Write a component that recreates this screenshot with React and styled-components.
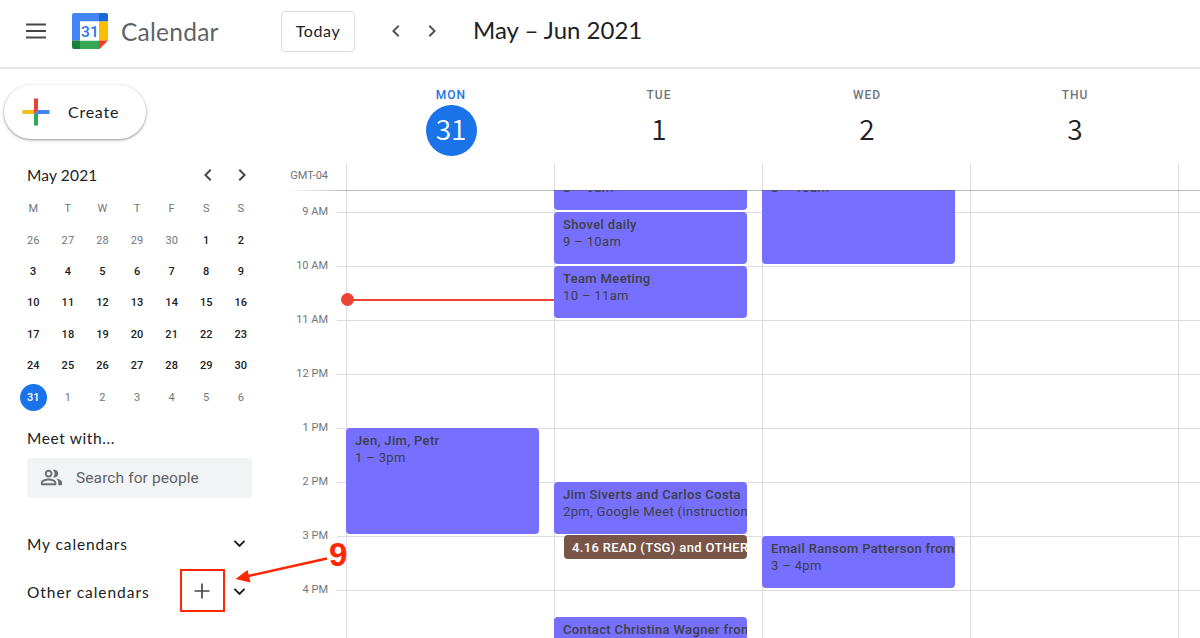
import React from "react";
import styled, { createGlobalStyle, css } from "styled-components";
import { MdChevronLeft, MdChevronRight, MdOutlinePeopleAlt, MdKeyboardArrowDown } from "react-icons/md";

const HOUR = 54;

const miniDays = ["M", "T", "W", "T", "F", "S", "S"];
// the mini month starts on April 26
const miniDates = [
  26, 27, 28, 29, 30,
  ...Array.from({ length: 31 }, (_, i) => i + 1),
  1, 2, 3, 4, 5, 6,
];

const hours = ["9 AM", "10 AM", "11 AM", "12 PM", "1 PM", "2 PM", "3 PM", "4 PM"];

// start and length are in half hours counted from 8 AM
const week = [
  {
    name: "MON", date: 31, today: true,
    events: [{ title: "Jen, Jim, Petr", time: "1 – 3pm", start: 10, length: 4 }],
  },
  {
    name: "TUE", date: 1,
    events: [
      { time: "8 – 9am", start: 0, length: 2 },
      { title: "Shovel daily", time: "9 – 10am", start: 2, length: 2 },
      { title: "Team Meeting", time: "10 – 11am", start: 4, length: 2 },
      { title: "Jim Siverts and Carlos Costa", time: "2pm, Google Meet (instructions)", start: 12, length: 2 },
      { title: "4.16 READ (TSG) and OTHER", start: 14, length: 1, brown: true },
      { title: "Contact Christina Wagner from", start: 17, length: 2 },
    ],
  },
  {
    name: "WED", date: 2,
    events: [
      { time: "8 – 10am", start: 0, length: 4 },
      { title: "Email Ransom Patterson from", time: "3 – 4pm", start: 14, length: 2 },
    ],
  },
  { name: "THU", date: 3, events: [] },
  { name: "", date: "", events: [] },
];

const Logo = () => (
  <svg width="36" height="36" viewBox="0 0 36 36">
    <path d="M2 0h25v8.5H8v19H0V2a2 2 0 0 1 2-2z" fill="#4285f4" />
    <path d="M27 0h7a2 2 0 0 1 2 2v6.5h-9z" fill="#1967d2" />
    <path d="M27 8.5h9v19h-9z" fill="#fbbc04" />
    <path d="M8 27.5h19.5V36H8z" fill="#34a853" />
    <path d="M0 27.5h8V36H2a2 2 0 0 1-2-2z" fill="#188038" />
    <path d="M27 27.5h9L27.5 36H27z" fill="#fc3a22" />
    <path d="M8 8.5h19v19H8z" fill="#fff" />
    <LogoText x="17.9" y="23.7" textAnchor="middle">31</LogoText>
  </svg>
);

const Plus = () => (
  <svg width="28" height="28" viewBox="0 0 28 28">
    <path d="M12 .5h4v12L12 16z" fill="#ea4335" />
    <path d="M.5 12H12v4H.5z" fill="#fbbc04" />
    <path d="M12 16h4v11.5h-4z" fill="#34a853" />
    <path d="M16 12h11.5v4H12z" fill="#4285f4" />
  </svg>
);

const Header = () => (
  <Top>
    <MenuButton>
      <svg viewBox="0 0 28 28">
        <path d="M4 7.5h20M4 14h20M4 20.5h20" stroke="currentColor" strokeWidth="1.8" />
      </svg>
    </MenuButton>
    <Brand>
      <Logo />
      <BrandName>Calendar</BrandName>
    </Brand>
    <Today>Today</Today>
    <Arrows>
      <MdChevronLeft />
      <MdChevronRight />
    </Arrows>
    <Range>May – Jun 2021</Range>
  </Top>
);

const MiniMonth = () => (
  <Month>
    <MonthTop>
      <SideTitle $spacing="0.15px">May 2021</SideTitle>
      <MonthArrows>
        <MdChevronLeft />
        <MdChevronRight />
      </MonthArrows>
    </MonthTop>
    <MonthGrid>
      {miniDays.map((day, i) => <MiniCell key={i} $muted>{day}</MiniCell>)}
      {miniDates.map((date, i) => (
        <MiniCell key={i} $muted={i < 5 || i > 35} $today={i === 35}>
          <span>{date}</span>
        </MiniCell>
      ))}
    </MonthGrid>
  </Month>
);

const Sidebar = () => (
  <Side>
    <Create>
      <Plus />
      <span>Create</span>
    </Create>
    <MiniMonth />
    <MeetTitle $spacing="0.6px">Meet with...</MeetTitle>
    <Search>
      <MdOutlinePeopleAlt />
      <span>Search for people</span>
    </Search>
    <ListRow>
      <ListName $spacing="0.9px">My calendars</ListName>
      <MdKeyboardArrowDown />
    </ListRow>
    <ListRow>
      <ListName $spacing="0.95px">Other calendars</ListName>
      <AddButton>
        <svg viewBox="0 0 26 26">
          <path d="M13 5.5v15M5.5 13h15" stroke="currentColor" strokeWidth="1.7" />
        </svg>
        <Highlight />
      </AddButton>
      <MdKeyboardArrowDown />
    </ListRow>
  </Side>
);

const Week = () => (
  <WeekArea>
    <DaysHead>
      {week.map((day, i) => (
        <DayHead key={i}>
          <DayName $today={day.today}>{day.name}</DayName>
          <DayDate $today={day.today}>{day.date}</DayDate>
        </DayHead>
      ))}
    </DaysHead>
    <AllDay>
      <Zone>GMT-04</Zone>
      {week.map((day, i) => <AllDayCell key={i} />)}
    </AllDay>
    <Divider />
    <Scroller>
      <TimeGrid>
        <Times>
          {hours.map((hour) => <Time key={hour}>{hour}</Time>)}
        </Times>
        <Ticks />
        {week.map((day, i) => (
          <Column key={i}>
            {day.events.map((event) => (
              <Event
                key={event.start}
                $start={event.start}
                $length={event.length}
                $brown={event.brown}
                $untitled={!event.title}
              >
                {event.title && <strong>{event.title}</strong>}
                {event.time && <span>{event.time}</span>}
              </Event>
            ))}
            {day.today && <NowLine />}
          </Column>
        ))}
      </TimeGrid>
    </Scroller>
  </WeekArea>
);

const App = () => {
  return (
    <Page>
      <GlobalStyle />
      <Header />
      <Main>
        <Sidebar />
        <Week />
      </Main>
      <Pointer width="120" height="50" viewBox="0 0 120 50">
        <path d="M97 18.5L18 36" stroke="#ff2600" strokeWidth="2.4" />
        <path d="M5.5 39L17.5 30L20.5 42.5z" fill="#ff2600" />
      </Pointer>
      <Step>9</Step>
    </Page>
  );
};

export default App;

const GlobalStyle = createGlobalStyle`
* {
  box-sizing: border-box;
}
body {
  margin: 0;
  background: #fff;
  font-family: Roboto, sans-serif;
  color: #202124;
  overflow: hidden;
}
`;

const googleFont = css`
font-family: Lato, sans-serif;
`;

const Page = styled.div`
position: relative;
width: 1200px;
height: 638px;
display: flex;
flex-direction: column;
overflow: hidden;
`;

const Top = styled.header`
height: 69px;
flex: none;
display: flex;
align-items: center;
padding-bottom: 5px;
border-bottom: 2px solid #e6e7e9;
`;

const MenuButton = styled.div`
width: 72px;
display: flex;
padding-left: 22px;

svg {
  width: 28px;
  height: 28px;
  color: #444746;
}
`;

const Brand = styled.div`
width: 209px;
display: flex;
align-items: center;
gap: 13px;
`;

const LogoText = styled.text`
font-family: Roboto, sans-serif;
font-size: 15.5px;
font-weight: 500;
fill: #2a75ea;
`;

const BrandName = styled.div`
${googleFont}
font-size: 24.5px;
line-height: 36px;
padding-top: 2px;
color: #5f6368;
letter-spacing: 0.25px;
`;

const Today = styled.div`
${googleFont}
width: 74px;
height: 41px;
display: flex;
align-items: center;
justify-content: center;
padding-bottom: 1px;
border: 1px solid #dadce0;
border-radius: 4px;
font-size: 16px;
letter-spacing: 0.6px;
`;

const Arrows = styled.div`
width: 118px;
display: flex;
gap: 12px;
padding-left: 29px;

svg {
  width: 24px;
  height: 24px;
  color: #50545a;
}
`;

const Range = styled.div`
${googleFont}
font-size: 24px;
line-height: 34px;
padding-bottom: 2px;
white-space: nowrap;
`;

const Main = styled.main`
flex: 1;
min-height: 0;
display: flex;
`;

const Side = styled.aside`
width: 284px;
flex: none;
padding: 16px 0 0 4px;
`;

const Create = styled.div`
${googleFont}
width: 142px;
height: 54px;
display: flex;
align-items: center;
gap: 18px;
padding-left: 18px;
border-radius: 27px;
box-shadow: 0 1px 2px rgba(60, 64, 67, 0.4), 0 1px 3px 1px rgba(60, 64, 67, 0.15);
font-size: 16px;
letter-spacing: 0.75px;

span {
  padding-bottom: 2px;
}
`;

const Month = styled.div`
padding-top: 23px;
`;

const MonthTop = styled.div`
height: 26px;
display: flex;
align-items: center;
justify-content: space-between;
padding: 0 30px 0 23px;
`;

const SideTitle = styled.div`
${googleFont}
font-size: 15.5px;
letter-spacing: ${({ $spacing }) => $spacing};
`;

const MonthArrows = styled.div`
display: flex;
gap: 10px;

svg {
  width: 24px;
  height: 24px;
  color: #44474b;
}
`;

const MonthGrid = styled.div`
width: 242px;
margin: 5px 0 0 12px;
display: grid;
grid-template-columns: repeat(7, 34.6px);
grid-auto-rows: 31.43px;
`;

const MiniCell = styled.div`
display: flex;
align-items: center;
justify-content: center;
font-size: 11px;
font-weight: 500;
letter-spacing: 0.1px;
color: #202124;
${({ $muted }) => $muted && `
font-weight: 400;
color: #70757a;
`}

span {
  width: 27px;
  height: 27px;
  flex: none;
  line-height: 27px;
  text-align: center;
  border-radius: 50%;
  ${({ $today }) => $today && `
  background: #1a73e8;
  color: #fff;
  `}
}
`;

const MeetTitle = styled(SideTitle)`
height: 44px;
padding: 15px 0 0 23px;
line-height: 20px;
`;

const Search = styled.div`
width: 225px;
height: 40px;
margin: 1px 0 22px 23px;
display: flex;
align-items: center;
gap: 13px;
padding-left: 13px;
border-radius: 4px;
background: #f1f3f4;
font-size: 15.5px;
letter-spacing: 0.1px;
color: #5f6368;

svg {
  width: 23px;
  height: 23px;
  margin-top: -1px;
  color: #6b6f74;
}

span {
  padding-top: 1px;
}
`;

const ListRow = styled.div`
height: 48px;
display: flex;
align-items: center;
padding: 0 33px 0 23px;

> svg {
  width: 23px;
  height: 23px;
}
`;

const ListName = styled(SideTitle)`
flex: 1;
`;

const AddButton = styled.div`
position: relative;
width: 45px;
height: 43px;
margin: -3px 3px 0 0;
display: flex;
align-items: center;
justify-content: center;
padding: 1px 1px 0 0;

svg {
  width: 26px;
  height: 26px;
  color: #444746;
}
`;

const Highlight = styled.div`
position: absolute;
inset: 0;
border: 2px solid #ff2600;
`;

const WeekArea = styled.section`
flex: 1;
min-width: 0;
display: flex;
flex-direction: column;
overflow: hidden;
`;

const DaysHead = styled.div`
height: 94px;
flex: none;
display: flex;
padding-left: 63px;
`;

const DayHead = styled.div`
width: 208px;
flex: none;
display: flex;
flex-direction: column;
align-items: center;
padding-top: 18px;
`;

const DayName = styled.div`
height: 18px;
font-size: 12px;
line-height: 17px;
letter-spacing: 1px;
font-weight: 500;
color: ${({ $today }) => ($today ? "#1a73e8" : "#70757a")};
`;

const DayDate = styled.div`
font-family: "Noto Sans CJK JP", sans-serif;
font-weight: 350;
width: 51px;
height: 51px;
line-height: 46px;
text-align: center;
border-radius: 50%;
font-size: 28px;
background: ${({ $today }) => ($today ? "#1a73e8" : "transparent")};
color: ${({ $today }) => ($today ? "#fff" : "#202124")};
`;

const AllDay = styled.div`
height: 27px;
flex: none;
display: flex;
`;

const Zone = styled.div`
width: 62px;
flex: none;
padding: 6px 18px 0 0;
text-align: right;
font-size: 11px;
line-height: 14px;
color: #70757a;
`;

const AllDayCell = styled.div`
width: 208px;
flex: none;
border-left: 1px solid #dadce0;
`;

const Divider = styled.div`
height: 1px;
flex: none;
position: relative;
z-index: 1;
margin-bottom: -1px;
background: linear-gradient(to right, transparent, rgba(60, 64, 67, 0.35) 62px);
`;

const Scroller = styled.div`
flex: 1;
min-height: 0;
overflow: hidden;
`;

// the grid starts at 8 AM, scrolled a bit under the header
const TimeGrid = styled.div`
margin-top: -32px;
height: 540px;
display: flex;
`;

const Times = styled.div`
width: 53px;
flex: none;
padding: 47px 9px 0 0;
`;

const Time = styled.div`
height: ${HOUR}px;
text-align: right;
font-size: 11px;
line-height: 14px;
color: #70757a;
`;

const hourLines = css`
background: repeating-linear-gradient(to bottom, #dadce0 0 1px, transparent 1px ${HOUR}px);
`;

const Ticks = styled.div`
${hourLines}
width: 9px;
flex: none;
`;

const Column = styled.div`
${hourLines}
position: relative;
width: 208px;
flex: none;
border-left: 1px solid #dadce0;
display: grid;
grid-template-columns: 192px;
grid-template-rows: repeat(20, ${HOUR / 2}px);
`;

const Event = styled.div`
grid-area: ${({ $start }) => $start + 1} / 1 / span ${({ $length }) => $length} / 2;
margin: 0 0 2px -1px;
padding: ${({ $untitled }) => ($untitled ? 21 : 4)}px 0 0 9px;
overflow: hidden;
border-radius: 4px;
background: #776fff;
color: #3c4043;
font-size: 13px;
line-height: 17px;
white-space: nowrap;
letter-spacing: 0.35px;

strong, span {
  display: block;
  font-weight: 500;
}
span {
  font-weight: 400;
}
${({ $brown }) => $brown && `
margin: -1px 0 4px 9px;
padding-left: 8px;
background: #795548;
color: #fff;
`}
`;

const NowLine = styled.div`
position: absolute;
left: 0;
top: 141px;
width: 207px;
height: 2px;
background: #ea4335;

&::before {
  content: "";
  position: absolute;
  left: -6px;
  top: -6px;
  width: 13px;
  height: 13px;
  border-radius: 50%;
  background: #ea4335;
}
`;

// callout drawn over the sidebar and the grid
const Pointer = styled.svg`
position: absolute;
left: 230px;
top: 540px;
`;

const Step = styled.div`
position: absolute;
left: 329px;
top: 536px;
font-family: "Liberation Sans", sans-serif;
font-size: 33px;
line-height: 38px;
font-weight: 700;
color: #ff2600;
`;
